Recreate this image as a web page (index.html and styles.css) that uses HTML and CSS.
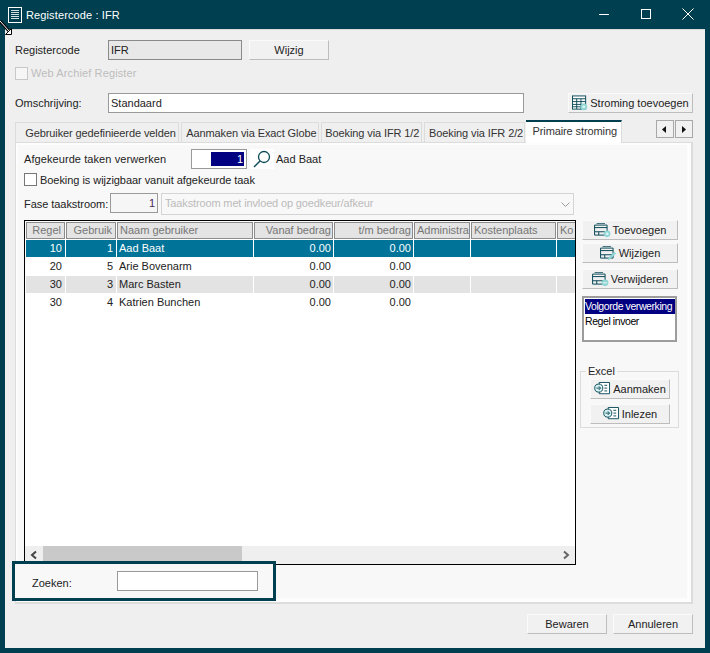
FILE: index.html
```html
<!DOCTYPE html>
<html lang="nl">
<head>
<meta charset="utf-8">
<title>Registercode : IFR</title>
<link rel="stylesheet" href="styles.css">
</head>
<body>
<div class="window">
  <header class="titlebar">
    <svg class="title-icon" width="14" height="16" viewBox="0 0 14 16"><rect x="0.5" y="0.5" width="13" height="15" fill="none" stroke="#fff"/><path d="M3 3.5h8M3 5.5h8M3 7.5h8M3 9.5h8M3 11.5h8" stroke="#cfe0e4" fill="none"/></svg>
    <span class="title-text">Registercode : IFR</span>
    <div class="controls">
      <svg width="12" height="12" viewBox="0 0 12 12"><path d="M1 6.5h10" stroke="#fff" fill="none"/></svg>
      <svg width="12" height="12" viewBox="0 0 12 12"><rect x="1.5" y="1.5" width="9" height="9" fill="none" stroke="#fff"/></svg>
      <svg width="12" height="12" viewBox="0 0 12 12"><path d="M0.5 0.5l11 11M11.5 0.5l-11 11" stroke="#fff" fill="none"/></svg>
    </div>
  </header>

  <main class="client">
    <div class="form-row row-code">
      <label class="lbl">Registercode</label>
      <div class="input readonly code">IFR</div>
      <button class="btn wijzig">Wijzig</button>
    </div>
    <div class="check-row row-web">
      <span class="check disabled"></span>
      <span class="muted">Web Archief Register</span>
    </div>
    <div class="form-row row-oms">
      <label class="lbl">Omschrijving:</label>
      <div class="input oms">Standaard</div>
      <button class="btn stroming">
        <svg width="16" height="16" viewBox="0 0 17 16"><rect x="0.5" y="0.5" width="14" height="14" fill="#fff" stroke="#0b4a58"/><path d="M0.5 3.5h14M0.5 6.5h14M0.5 9.5h14M0.5 12h14M5 3.5v11M9.5 3.5v11" stroke="#0b4a58" fill="none"/><circle cx="12.5" cy="12" r="3.6" fill="#8fd5d3"/><circle cx="12.5" cy="12" r="1.6" fill="#d7f2f1"/></svg>
        Stroming toevoegen
      </button>
    </div>

    <div class="tabs">
      <span class="tab t1">Gebruiker gedefinieerde velden</span>
      <span class="tab t2">Aanmaken via Exact Globe</span>
      <span class="tab t3">Boeking via IFR 1/2</span>
      <span class="tab t4">Boeking via IFR 2/2</span>
      <span class="tab active">Primaire stroming</span>
      <div class="tab-scroll">
        <span class="arrow-box"><svg width="5" height="7" viewBox="0 0 5 7"><path d="M4 0v7L0 3.5z" fill="#111"/></svg></span>
        <span class="arrow-box"><svg width="5" height="7" viewBox="0 0 5 7"><path d="M1 0v7l4-3.500z" fill="#111"/></svg></span>
      </div>
    </div>

    <section class="panel">
      <div class="panel-row row-afg">
        <label class="lbl afg-label">Afgekeurde taken verwerken</label>
        <div class="input afg-input"><span class="selected">1</span></div>
        <svg class="search" width="24" height="20" viewBox="0 0 24 20"><circle cx="14" cy="8" r="5.500" fill="none" stroke="#0b4a58" stroke-width="1.300"/><path d="M10 12l-6 6" stroke="#0b4a58" stroke-width="1.500" fill="none"/></svg>
        <span class="afg-name">Aad Baat</span>
      </div>
      <div class="check-row row-boek">
        <span class="check"></span>
        <span class="boek-text">Boeking is wijzigbaar vanuit afgekeurde taak</span>
      </div>
      <div class="panel-row row-fase">
        <label class="lbl fase-label">Fase taakstroom:</label>
        <div class="input fase-input">1</div>
        <div class="select">
          <span class="select-text">Taakstroom met invloed op goedkeur/afkeur</span>
          <svg width="9" height="5" viewBox="0 0 9 5"><path d="M0.500 0.500l4 4 4-4" stroke="#9a9a9a" fill="none"/></svg>
        </div>
      </div>

      <div class="work">
        <div class="grid">
          <div class="grid-body">
            <div class="grid-row head">
              <span class="num">Regel</span><span class="num">Gebruik</span><span>Naam gebruiker</span><span class="num">Vanaf bedrag</span><span class="num">t/m bedrag</span><span>Administra</span><span>Kostenplaats</span><span>Ko</span>
            </div>
            <div class="grid-row sel">
              <span class="num">10</span><span class="num">1</span><span>Aad Baat</span><span class="num">0.00</span><span class="num">0.00</span><span></span><span></span><span></span>
            </div>
            <div class="grid-row">
              <span class="num">20</span><span class="num">5</span><span>Arie Bovenarm</span><span class="num">0.00</span><span class="num">0.00</span><span></span><span></span><span></span>
            </div>
            <div class="grid-row alt">
              <span class="num">30</span><span class="num">3</span><span>Marc Basten</span><span class="num">0.00</span><span class="num">0.00</span><span></span><span></span><span></span>
            </div>
            <div class="grid-row">
              <span class="num">30</span><span class="num">4</span><span>Katrien Bunchen</span><span class="num">0.00</span><span class="num">0.00</span><span></span><span></span><span></span>
            </div>
          </div>
          <div class="hscroll">
            <svg width="18" height="18" viewBox="0 0 18 18"><path d="M11 5.500L7 9l4 3.500" fill="none" stroke="#444" stroke-width="2"/></svg>
            <div class="track"><div class="thumb"></div></div>
            <svg width="18" height="18" viewBox="0 0 18 18"><path d="M7 5.500l4 3.500-4 3.500" fill="none" stroke="#666" stroke-width="2"/></svg>
          </div>
        </div>

        <aside class="side">
          <button class="btn side-btn b-add">
            <svg width="17" height="15" viewBox="0 0 20 18"><path d="M0.500 2.500h15v12h-15zM0.500 5.500h15M0.500 10.500h15M5.500 10.500v4" fill="none" stroke="#0b4a58" stroke-width="1.200"/><path d="M3 0.500h10" stroke="#0b4a58" fill="none"/><circle cx="15.500" cy="13" r="4" fill="#8fd5d3"/><circle cx="15.500" cy="13" r="1.800" fill="#d7f2f1"/></svg>
            Toevoegen
          </button>
          <button class="btn side-btn b-edit">
            <svg width="17" height="15" viewBox="0 0 20 18"><path d="M0.500 2.500h15v12h-15zM0.500 5.500h15M0.500 10.500h15M5.500 10.500v4" fill="none" stroke="#0b4a58" stroke-width="1.200"/><path d="M3 0.500h10" stroke="#0b4a58" fill="none"/><path d="M9 17l1-3 7-7 2 2-7 7z" fill="#8fd5d3"/></svg>
            Wijzigen
          </button>
          <button class="btn side-btn b-del">
            <svg width="17" height="15" viewBox="0 0 20 18"><path d="M0.500 2.500h15v12h-15zM0.500 5.500h15M0.500 10.500h15M5.500 10.500v4" fill="none" stroke="#0b4a58" stroke-width="1.200"/><path d="M3 0.500h10" stroke="#0b4a58" fill="none"/><circle cx="15.500" cy="13" r="4" fill="#8fd5d3"/><path d="M13 13h5" stroke="#fff" fill="none"/></svg>
            Verwijderen
          </button>
          <div class="listbox">
            <div class="opt on">Volgorde verwerking</div>
            <div class="opt">Regel invoer</div>
          </div>
          <fieldset class="excel">
            <legend>Excel</legend>
            <button class="btn xl-btn">
              <svg width="17" height="15" viewBox="0 0 18 16"><path d="M5.500 0.500h11v12h-11z" fill="#fff" stroke="#0b4a58"/><path d="M11 3.500h3M11 6.500h3M11 9.500h3" stroke="#0b4a58" fill="none"/><circle cx="5" cy="6.500" r="4.300" fill="#d7f2f1" stroke="#0b4a58"/><path d="M2.500 6.500h4M5 4.500l2 2-2 2" stroke="#0b4a58" fill="none"/></svg>
              Aanmaken
            </button>
            <button class="btn xl-btn">
              <svg width="17" height="15" viewBox="0 0 18 16"><path d="M5.500 0.500h11v12h-11z" fill="#fff" stroke="#0b4a58"/><path d="M11 3.500h3M11 6.500h3M11 9.500h3" stroke="#0b4a58" fill="none"/><circle cx="5" cy="6.500" r="4.300" fill="#d7f2f1" stroke="#0b4a58"/><path d="M2.500 6.500h4M5 4.500l2 2-2 2" stroke="#0b4a58" fill="none"/></svg>
              Inlezen
            </button>
          </fieldset>
        </aside>
      </div>
    </section>

    <footer class="actions">
      <button class="btn action">Bewaren</button>
      <button class="btn action">Annuleren</button>
    </footer>

    <div class="search-box">
      <label class="lbl zoek-label">Zoeken:</label>
      <div class="input zoek-input"></div>
    </div>
  </main>

  <svg class="cursor" width="13" height="16" viewBox="0 0 13 16"><path d="M0 1l9 10" stroke="#000" stroke-width="3" fill="none"/><path d="M0 1l9 10" stroke="#fff" fill="none"/><path d="M11.500 8.500v6h-6z" fill="#fff" stroke="#000"/></svg>
</div>
</body>
</html>
```
FILE: styles.css
```css
* { box-sizing: border-box; }
html, body { margin: 0; padding: 0; }
body {
  width: 710px;
  height: 653px;
  overflow: hidden;
  font-family: "Liberation Sans", Arial, sans-serif;
  font-size: 11px;
  color: #222;
  white-space: nowrap;
}
.window {
  position: relative;
  width: 710px;
  height: 653px;
  background: #003f4f;
  padding: 0 5px 5px;
  display: flex;
  flex-direction: column;
}
.titlebar {
  height: 29px;
  flex: none;
  display: flex;
  align-items: center;
  color: #fff;
  padding: 0 0 0 3px;
}
.title-icon { margin-right: 4px; }
.title-text { font-size: 11px; letter-spacing: 0.12px; }
.controls {
  margin-left: auto;
  display: flex;
  gap: 30px;
  padding-right: 11px;
  margin-top: -1px;
}
.client {
  position: relative;
  flex: 1;
  background: #efefef;
  border-top: 1px solid #d8d8d8;
  padding: 10px 12px 0 10px;
  display: flex;
  flex-direction: column;
}
.form-row { display: flex; align-items: center; height: 20px; }
.lbl { display: block; }
.row-code .lbl, .row-oms .lbl { width: 93px; }
.input {
  height: 20px;
  background: #fff;
  border: 1px solid #9a9a9a;
  display: flex;
  align-items: center;
  padding: 0 2px;
}
.readonly { background: #e8e8e8; border-color: #8a8a8a; }
.code { width: 134px; }
.oms { width: 416px; }
.btn {
  font: inherit;
  color: #222;
  height: 20px;
  padding: 0;
  background: #f1f1f1;
  border: 1px solid;
  border-color: #fafafa #bdbdbd #bdbdbd #fafafa;
  display: flex;
  align-items: center;
  justify-content: center;
}
.wijzig { width: 80px; margin-left: 7px; }
.stroming { width: 125px; margin-left: 44px; gap: 2px; }
.check-row { display: flex; align-items: center; gap: 3px; }
.row-web { margin-top: 7px; height: 12px; }
.row-oms { margin-top: 14px; }
.check { width: 13px; height: 13px; background: #fff; border: 1px solid #777; flex: none; }
.check.disabled { background: #f6f6f6; border-color: #c8c8c8; }
.muted { color: #bdbdbd; letter-spacing: 0.12px; }

.tabs {
  margin-top: 6px;
  height: 23px;
  display: flex;
  align-items: flex-end;
  position: relative;
  z-index: 1;
}
.tab {
  height: 20px;
  background: #efefef;
  border: 1px solid #dcdcdc;
  border-bottom: 0;
  display: flex;
  align-items: center;
  justify-content: flex-end;
  padding-right: 2px;
  color: #333;
  letter-spacing: -0.1px;
}
.t1 { width: 164px; margin-right: 2px; }
.t2 { width: 139px; margin-right: 2px; }
.t3 { width: 101px; margin-right: 2px; }
.t4 { width: 101px; margin-right: 1px; padding-right: 1px; }
.active {
  width: 96px;
  height: 23px;
  margin-bottom: -1px;
  background: #fff;
  border: 0;
  border-top: 2px solid #003f4f;
  border-right: 1px solid #dcdcdc;
  padding-right: 4px;
  padding-bottom: 3px;
}
.tab-scroll { margin-left: 34px; display: flex; gap: 1px; align-self: flex-start; margin-top: 1px; }
.arrow-box {
  width: 18px;
  height: 18px;
  background: #f1f1f1;
  border: 1px solid #a8a8a8;
  display: flex;
  align-items: center;
  justify-content: center;
}

.panel {
  width: 678px;
  height: 462px;
  background: #f8f8f8;
  border: 1px solid #dcdcdc;
  border-bottom-width: 2px;
  border-right-width: 2px;
  box-shadow: inset -4px -4px 0 #fdfdfd, inset 2px 2px 0 #fdfdfd;
  padding: 6px 8px 0 8px;
}
.panel-row { display: flex; align-items: center; }
.afg-label { width: 167px; letter-spacing: 0.08px; }
.afg-input { width: 56px; justify-content: flex-end; padding: 0 2px; }
.selected {
  width: 33px;
  height: 14px;
  background: #000080;
  color: #fff;
  text-align: right;
  line-height: 14px;
  padding-right: 1px;
}
.search { margin-left: 3px; background: #fff; }
.afg-name { margin-left: 2px; }
.row-boek { margin-top: 4px; height: 13px; }
.boek-text { letter-spacing: -0.05px; }
.row-fase { margin-top: 7px; align-items: flex-start; }
.fase-label { width: 86px; height: 20px; line-height: 22px; letter-spacing: -0.05px; }
.fase-input {
  width: 48px;
  background: #f6f6f6;
  justify-content: flex-end;
  color: #4b1f5c;
}
.select {
  width: 413px;
  height: 22px;
  margin-left: 3px;
  background: #f8f8f8;
  border: 1px solid #d4d4d4;
  display: flex;
  align-items: center;
  justify-content: space-between;
  padding: 0 3px 0 3px;
  color: #bbb;
  letter-spacing: -0.14px;
}
.select-text { margin-top: -3px; }

.work { display: flex; margin-top: 5px; align-items: flex-start; }
.grid {
  width: 552px;
  height: 345px;
  background: #fff;
  border: 1px solid #000;
  display: flex;
  flex-direction: column;
  padding: 1px 0 0 1px;
  overflow: hidden;
}
.grid-body { flex: 1; overflow: hidden; }
.grid-row {
  display: grid;
  grid-template-columns: 39px 50px 136px 79px 79px 56px 85px 86px;
  column-gap: 1px;
  height: 17px;
  margin-bottom: 1px;
  width: 600px;
}
.grid-row span {
  padding: 0 2px 0 2px;
  line-height: 17px;
  white-space: nowrap;
  overflow: hidden;
}
.grid-row span:nth-child(-n+2) { padding-right: 3px; }
.grid-row .num { text-align: right; }
.head span {
  background: #e4e4e4;
  border: 1px solid #8c8c8c;
  color: #777;
  line-height: 15px;
  padding: 0 1px 0 2px;
}
.sel span { background: #007399; color: #fff; }
.alt span { background: #e3e3e3; }
.hscroll {
  flex: none;
  height: 18px;
  background: #efefef;
  display: flex;
  margin-left: -1px;
  width: 550px;
}
.track { flex: 1; }
.thumb { width: 199px; height: 18px; background: #c9c9c9; }

.side { width: 100px; margin-left: 6px; display: flex; flex-direction: column; align-items: flex-start; }
.side-btn { width: 96px; gap: 2px; }
.b-edit { margin-top: 3px; }
.b-del { margin-top: 6px; }
.listbox {
  width: 95px;
  height: 46px;
  margin-top: 7px;
  background: #fff;
  border: 2px solid #9c9c9c;
  padding: 1px 0 0 1px;
  font-size: 10.5px;
  letter-spacing: -0.42px;
  color: #000;
}
.opt { height: 15px; line-height: 15px; padding-left: 0; }
.on { background: #000080; color: #fff; }
.excel {
  width: 99px;
  height: 63px;
  margin: 23px 0 0 -2px;
  padding: 2px 0 0 9px;
  border: 1px solid #dcdcdc;
  display: block;
}
.excel legend { padding: 0 2px; margin-left: -4px; font-size: 11px; line-height: 12px; }
.xl-btn { width: 80px; gap: 2px; margin-bottom: 5px; }

.actions {
  margin-top: 10px;
  display: flex;
  justify-content: flex-end;
  gap: 6px;
}
.action { width: 80px; }

.search-box {
  position: absolute;
  left: 7px;
  top: 531px;
  width: 264px;
  height: 40px;
  background: #f8f8f8;
  border: 3px solid #003f4f;
  display: flex;
  align-items: center;
  padding-left: 17px;
}
.zoek-label { width: 85px; margin-top: 3px; }
.zoek-input { width: 141px; }
.cursor { position: absolute; left: 0; top: 20px; }
```
